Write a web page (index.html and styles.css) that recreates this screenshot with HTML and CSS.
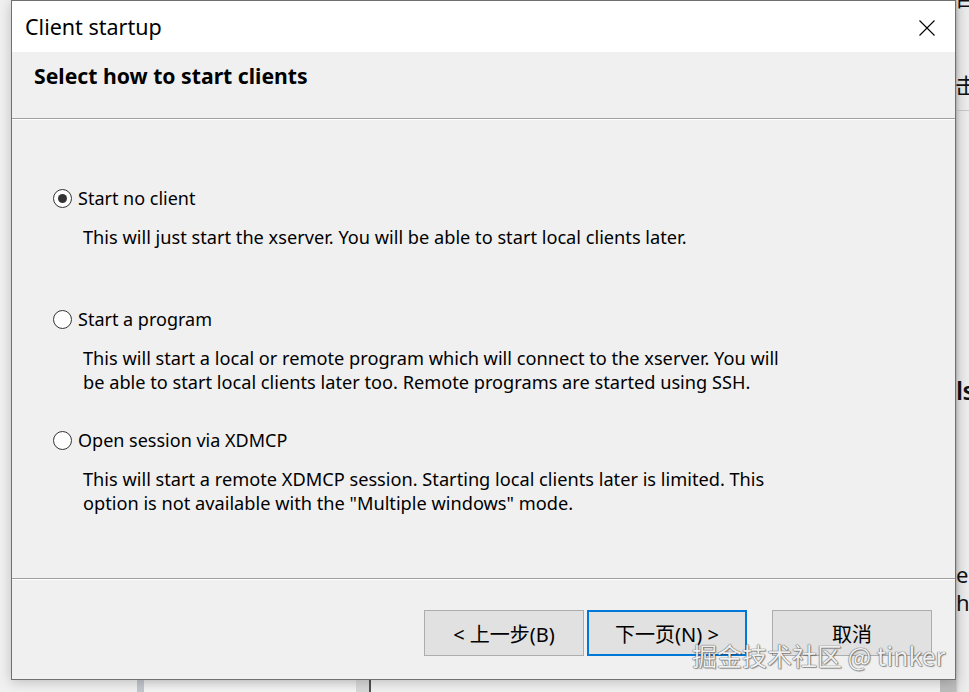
FILE: index.html
```html
<!DOCTYPE html>
<html lang="en">
<head>
<meta charset="utf-8">
<title>Client startup</title>
<link rel="stylesheet" href="styles.css">
</head>
<body>
<div class="desktop">
  <div class="backwin backwin-right">
    <span class="frag frag-top">目</span>
    <span class="frag frag-click">点击</span>
    <div class="frag-rule"></div>
    <span class="frag frag-ls">ls</span>
    <span class="frag frag-e">e</span>
    <span class="frag frag-h">h</span>
  </div>
  <div class="backwin backwin-bottom">
    <div class="bb bb-edge"></div>
    <div class="bb bb-pane"></div>
    <div class="bb bb-scroll"></div>
    <div class="bb bb-line"></div>
  </div>

  <div class="dialog">
    <div class="titlebar">
      <span class="title">Client startup</span>
      <svg class="close" width="16" height="16" viewBox="0 0 16 16"><path d="M0.5 0.5 L15.5 15.5 M15.5 0.5 L0.5 15.5" stroke="#000" stroke-width="1.1" fill="none"/></svg>
    </div>
    <div class="header">
      <h1 class="heading">Select how to start clients</h1>
    </div>
    <div class="etched"></div>
    <div class="content">
      <div class="option">
        <div class="opt-label"><span class="radio checked"></span>Start no client</div>
        <p class="desc">This will just start the xserver. You will be able to start local clients later.</p>
      </div>
      <div class="option">
        <div class="opt-label"><span class="radio"></span>Start a program</div>
        <p class="desc">This will start a local or remote program which will connect to the xserver. You will<br>be able to start local clients later too. Remote programs are started using SSH.</p>
      </div>
      <div class="option">
        <div class="opt-label"><span class="radio"></span>Open session via XDMCP</div>
        <p class="desc">This will start a remote XDMCP session. Starting local clients later is limited. This<br>option is not available with the "Multiple windows" mode.</p>
      </div>
    </div>
    <div class="etched"></div>
    <div class="footer">
      <button class="btn">&lt; 上一步(B)</button>
      <button class="btn default">下一页(N) &gt;</button>
      <button class="btn cancel">取消</button>
    </div>
  </div>

  <div class="watermark">掘金技术社区 @ tinker</div>
</div>
</body>
</html>
```

FILE: styles.css
```css
html, body {
  margin: 0;
  padding: 0;
}
body {
  width: 969px;
  height: 692px;
  overflow: hidden;
  font-family: "Noto Sans", "Noto Sans CJK SC", sans-serif;
  color: #000;
}
.desktop {
  position: relative;
  width: 969px;
  height: 692px;
  background: #f1f1f1;
  overflow: hidden;
}

/* background windows */
.backwin {
  position: absolute;
}
.backwin-right {
  left: 940px;
  top: 0;
  width: 40px;
  height: 692px;
  background: linear-gradient(90deg, #bdbdbd 0, #bdbdbd 16px, #d6d6d6 17px, #e8e8e8 20px, #ededed 29px);
}
.frag {
  position: absolute;
  white-space: nowrap;
  color: #111;
}
.frag-top { top: -17px; left: 15px; font-family: "Noto Sans CJK SC", sans-serif; font-size: 22px; line-height: 26px; }
.frag-click { top: 70px; left: -7px; font-family: "Noto Sans CJK SC", sans-serif; font-size: 22px; line-height: 28px; }
.frag-rule {
  position: absolute;
  top: 110px;
  left: 0;
  width: 40px;
  border-top: 1px solid #c8c8c8;
}
.frag-ls { top: 374px; left: 16px; font-size: 25px; line-height: 32px; font-weight: 600; letter-spacing: -0.5px; }
.frag-e { top: 560px; left: 16px; font-size: 22px; line-height: 28px; }
.frag-h { top: 588px; left: 16px; font-size: 22px; line-height: 28px; }

.backwin-bottom {
  left: 0;
  top: 680px;
  width: 969px;
  height: 12px;
  display: flex;
}
.bb { height: 12px; }
.bb-edge { margin-left: 137px; width: 7px; background: #c3c8cd; }
.bb-pane { width: 212px; background: linear-gradient(#e9e9e9, #f7f7f7); }
.bb-scroll { width: 13px; background: #d9d9d9; }
.bb-line { width: 2px; background: #505050; }

/* dialog */
.dialog {
  position: absolute;
  left: 11px;
  top: 0;
  width: 943px;
  height: 678px;
  border: 1px solid #707070;
  background: #f0f0f0;
  box-shadow: 0 2px 12px rgba(0,0,0,0.22);
  display: flex;
  flex-direction: column;
}
.titlebar {
  height: 51px;
  background: #fff;
  display: flex;
  align-items: center;
  justify-content: space-between;
  padding: 0 20px 0 13px;
  flex: none;
}
.title {
  font-size: 21.5px;
  position: relative;
  top: 0px;
}
.close {
  display: block;
  position: relative;
  top: 1px;
}
.header {
  height: 66px;
  padding-left: 22px;
  display: flex;
  align-items: flex-start;
  flex: none;
}
.heading {
  margin: 0;
  font-size: 21.2px;
  font-weight: 700;
  line-height: 28px;
  padding-top: 10px;
}
.etched {
  flex: none;
  height: 0;
  border-top: 1px solid #a0a0a0;
  border-bottom: 1px solid #ffffff;
}
.content {
  height: 458px;
  padding-top: 66px;
  box-sizing: border-box;
  flex: none;
}
.option {
  height: 121px;
}
.opt-label {
  display: flex;
  align-items: center;
  height: 24px;
  padding-left: 41px;
  font-size: 18px;
}
.radio {
  width: 17px;
  height: 17px;
  border: 1px solid #333;
  border-radius: 50%;
  background: #fff;
  margin-right: 6px;
  box-sizing: content-box;
  position: relative;
  flex: none;
}
.radio.checked::after {
  content: "";
  position: absolute;
  left: 4px;
  top: 4px;
  width: 9px;
  height: 9px;
  border-radius: 50%;
  background: #333;
}
.desc {
  margin: 15px 0 0 71px;
  font-size: 18.2px;
  line-height: 24px;
}
.footer {
  flex: 1;
  display: flex;
  align-items: flex-start;
  justify-content: flex-end;
  padding: 30px 23px 0 0;
}
.btn {
  width: 160px;
  height: 46px;
  background: #e1e1e1;
  border: 1px solid #adadad;
  font-family: "Noto Sans", "Noto Sans CJK SC", sans-serif;
  font-size: 20px;
  color: #000;
  padding: 0;
  margin: 0 0 0 3px;
}
.btn.default {
  border: 2px solid #0078d7;
}
.btn.cancel {
  margin-left: 25px;
}

.watermark {
  position: absolute;
  left: 692px;
  top: 638px;
  font-family: "Noto Sans CJK SC", "Noto Sans", sans-serif;
  font-size: 25px;
  line-height: 34px;
  color: rgba(255,255,255,0.92);
  text-shadow: 0 0 1px #555, 0 0 1px #555, 1px 1px 1px rgba(0,0,0,0.35);
  white-space: nowrap;
}
```
